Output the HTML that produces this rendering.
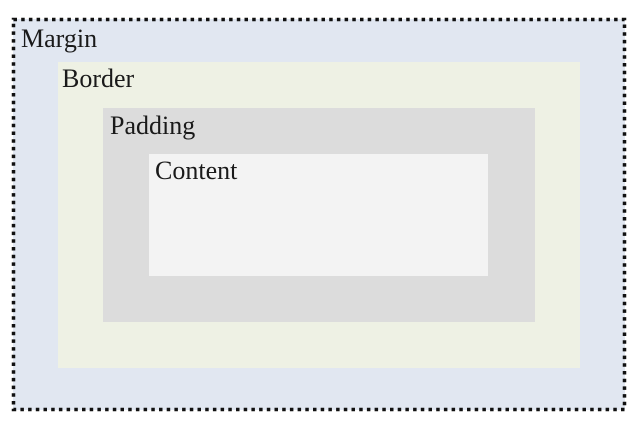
<!DOCTYPE html>
<html><head><meta charset="utf-8"><style>
body{margin:0;width:636px;height:422px;background:#fff;position:relative;overflow:hidden;font-family:"Liberation Serif",serif;font-size:26px;color:#1a1a1a}
div{position:absolute}
span{position:absolute;line-height:1;white-space:nowrap}
</style></head><body>
<div style="left:13px;top:19px;width:612px;height:391px;background:#e1e7f1"></div>
<div style="left:58px;top:62px;width:522px;height:306px;background:#eef1e4"></div>
<div style="left:103px;top:108px;width:432px;height:214px;background:#dcdcdc"></div>
<div style="left:149px;top:154px;width:339px;height:122px;background:#f3f3f3"></div>
<svg width="636" height="422" style="position:absolute;left:0;top:0">
<rect x="13.5" y="19.5" width="611" height="390" fill="none" stroke="#111" stroke-width="3.5" stroke-dasharray="3.5 4.2"/>
</svg>
<span style="left:21px;top:26px">Margin</span>
<span style="left:62px;top:66px">Border</span>
<span style="left:110px;top:113px">Padding</span>
<span style="left:155px;top:158px">Content</span>
</body></html>
